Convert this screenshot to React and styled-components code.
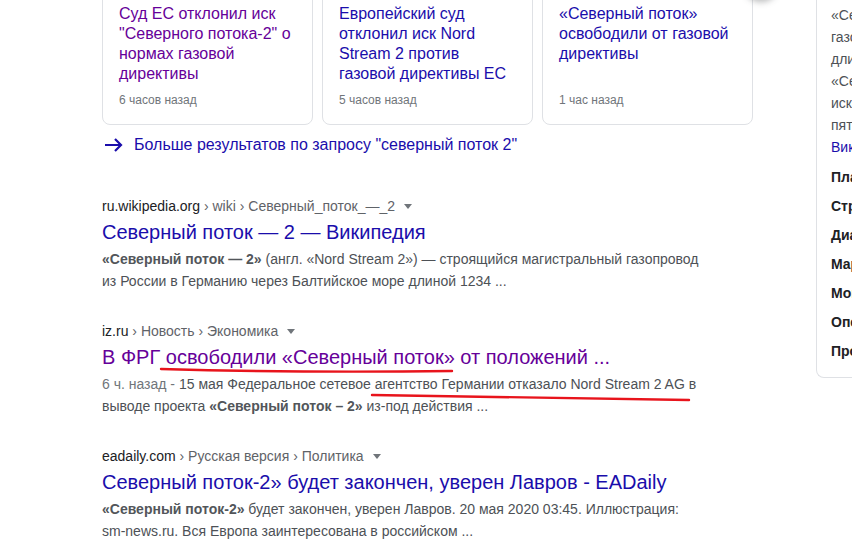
import React from 'react'
import styled, { createGlobalStyle } from 'styled-components'

const Global = createGlobalStyle`
  html, body {
    margin: 0;
    padding: 0;
    background: #fff;
    overflow: hidden;
  }
  body {
    font-family: "Liberation Sans", Arial, sans-serif;
    width: 852px;
    height: 549px;
  }
`

const cards = [
  {
    lines: ['Суд ЕС отклонил иск', '"Северного потока-2" о', 'нормах газовой', 'директивы'],
    time: '6 часов назад',
    visited: true,
  },
  {
    lines: ['Европейский суд', 'отклонил иск Nord', 'Stream 2 против', 'газовой директивы ЕС'],
    time: '5 часов назад',
  },
  {
    lines: ['«Северный поток»', 'освободили от газовой', 'директивы'],
    time: '1 час назад',
  },
]

const panelLines = [
  '«Северный поток — 2» — магистральный',
  'газопровод из России в Германию',
  'длиной 1234 км.',
  '«Северный поток — 2» строится',
  'исключительно по дну Балтийского моря',
  'пятью странами.',
]

const facts = [
  'Плановая мощность:',
  'Страны:',
  'Диаметр:',
  'Маршрут:',
  'Мощность:',
  'Оператор:',
  'Протяжённость:',
]

const App = () => {
  return (
    <>
      <Global />
      <Page>
        <Main>
          <Cards>
            {cards.map((c, i) => (
              <Card key={i}>
                <CardTitle $visited={c.visited}>
                  {c.lines.map((l, j) => (
                    <Line key={j}>{l}</Line>
                  ))}
                </CardTitle>
                <CardTime>{c.time}</CardTime>
              </Card>
            ))}
          </Cards>

          <MoreLink>
            <svg width="20" height="14" viewBox="0 0 20 14">
              <path d="M1 7 H17 M11 1 L17 7 L11 13" fill="none" stroke="#1a0dab" strokeWidth="2.2" />
            </svg>
            <span>Больше результатов по запросу "северный поток 2"</span>
          </MoreLink>

          <Results>
            <Result>
              <Crumb>
                <Domain>ru.wikipedia.org</Domain> › wiki › Северный_поток_—_2
                <Caret />
              </Crumb>
              <Title>Северный поток — 2 — Википедия</Title>
              <Snippet>
                <Line>
                  <B>«Северный поток — 2»</B> (англ. «Nord Stream 2») — строящийся магистральный газопровод
                </Line>
                <Line>из России в Германию через Балтийское море длиной 1234 ...</Line>
              </Snippet>
            </Result>

            <Result>
              <Crumb>
                <Domain>iz.ru</Domain> › Новость › Экономика
                <Caret />
              </Crumb>
              <Title $visited>В ФРГ освободили «Северный поток» от положений ...</Title>
              <Snippet>
                <Line>
                  <Date>6 ч. назад - </Date>15 мая Федеральное сетевое агентство Германии отказало Nord Stream 2 AG в
                </Line>
                <Line>
                  выводе проекта <B>«Северный поток – 2»</B> из-под действия ...
                </Line>
              </Snippet>
              <Marks width="652" height="100" viewBox="0 0 652 100">
                <path d="M59 48 Q200 52 350 50" fill="none" stroke="#e8141c" strokeWidth="2.4" strokeLinecap="round" />
                <path d="M270 74 Q430 76 587 79" fill="none" stroke="#e8141c" strokeWidth="2.4" strokeLinecap="round" />
              </Marks>
            </Result>

            <Result>
              <Crumb>
                <Domain>eadaily.com</Domain> › Русская версия › Политика
                <Caret />
              </Crumb>
              <Title>Северный поток-2» будет закончен, уверен Лавров - EADaily</Title>
              <Snippet>
                <Line>
                  <B>«Северный поток-2»</B> будет закончен, уверен Лавров. 20 мая 2020 03:45. Иллюстрация:
                </Line>
                <Line>sm-news.ru. Вся Европа заинтересована в российском ...</Line>
              </Snippet>
            </Result>
          </Results>
        </Main>

        <Panel>
          <About>
            {panelLines.map((l, i) => (
              <Line key={i}>{l}</Line>
            ))}
            <WikiLink>Википедия</WikiLink>
          </About>
          <Facts>
            {facts.map((f, i) => (
              <Fact key={i}>{f}</Fact>
            ))}
          </Facts>
        </Panel>

        <ScrollButton />
      </Page>
    </>
  )
}

export default App

const Page = styled.div`
  position: relative;
  display: flex;
  align-items: flex-start;
  margin-top: -13px;
`

const Main = styled.div`
  margin-left: 102px;
  width: 652px;
  flex-shrink: 0;
`

const Cards = styled.div`
  display: flex;
  gap: 9px;
`

const Card = styled.div`
  width: 211px;
  height: 138px;
  box-sizing: border-box;
  border: 1px solid #dfe1e5;
  border-radius: 8px;
  padding: 16px 16px 16px 16px;
  display: flex;
  flex-direction: column;
  justify-content: space-between;
`

const CardTitle = styled.div`
  font-size: 16px;
  line-height: 20px;
  color: ${(p) => (p.$visited ? '#660099' : '#1a0dab')};
`

const Line = styled.span`
  display: block;
  white-space: nowrap;
`

const CardTime = styled.div`
  font-size: 12px;
  line-height: 16px;
  color: #70757a;
`

const MoreLink = styled.div`
  margin-top: 8px;
  height: 24px;
  display: flex;
  align-items: center;
  gap: 10px;
  padding-left: 2px;
  font-size: 16px;
  color: #1a0dab;
  white-space: nowrap;
`

const Results = styled.div`
  margin-top: 39px;
`

const Result = styled.div`
  position: relative;
  margin-bottom: 29px;
`

const Crumb = styled.div`
  font-size: 14px;
  line-height: 20px;
  color: #5f6368;
  white-space: nowrap;
`

const Domain = styled.span`
  color: #202124;
`

const Caret = styled.span`
  display: inline-block;
  vertical-align: middle;
  margin-left: 9px;
  margin-top: -2px;
  border-left: 4px solid transparent;
  border-right: 4px solid transparent;
  border-top: 5px solid #70757a;
`

const Title = styled.div`
  margin-top: 3px;
  font-size: 20px;
  line-height: 26px;
  color: ${(p) => (p.$visited ? '#660099' : '#1a0dab')};
  white-space: nowrap;
`

const Snippet = styled.div`
  margin-top: 3px;
  font-size: 14px;
  line-height: 22px;
  color: #4d5156;
`

const B = styled.b`
  color: #52565a;
`

const Date = styled.span`
  color: #70757a;
`

const Marks = styled.svg`
  position: absolute;
  left: 0;
  top: 0;
  pointer-events: none;
`

const Panel = styled.div`
  margin-left: 62px;
  width: 370px;
  flex-shrink: 0;
  box-sizing: border-box;
  border-left: 1px solid #dfe1e5;
  border-bottom: 1px solid #dfe1e5;
  border-bottom-left-radius: 8px;
  padding: 17px 0 16px 14px;
`

const About = styled.div`
  font-size: 14px;
  line-height: 22px;
  color: #4d5156;
`

const WikiLink = styled.span`
  display: block;
  color: #1a0dab;
`

const Facts = styled.div`
  margin-top: 5px;
`

const Fact = styled.div`
  margin-top: 9px;
  font-size: 14px;
  line-height: 20px;
  font-weight: bold;
  color: #202124;
  white-space: nowrap;
`

const ScrollButton = styled.div`
  position: absolute;
  left: 743px;
  top: -23px;
  width: 36px;
  height: 36px;
  border-radius: 50%;
  background: #fff;
  box-shadow: 0 2px 6px rgba(60, 64, 67, 0.35);
`
